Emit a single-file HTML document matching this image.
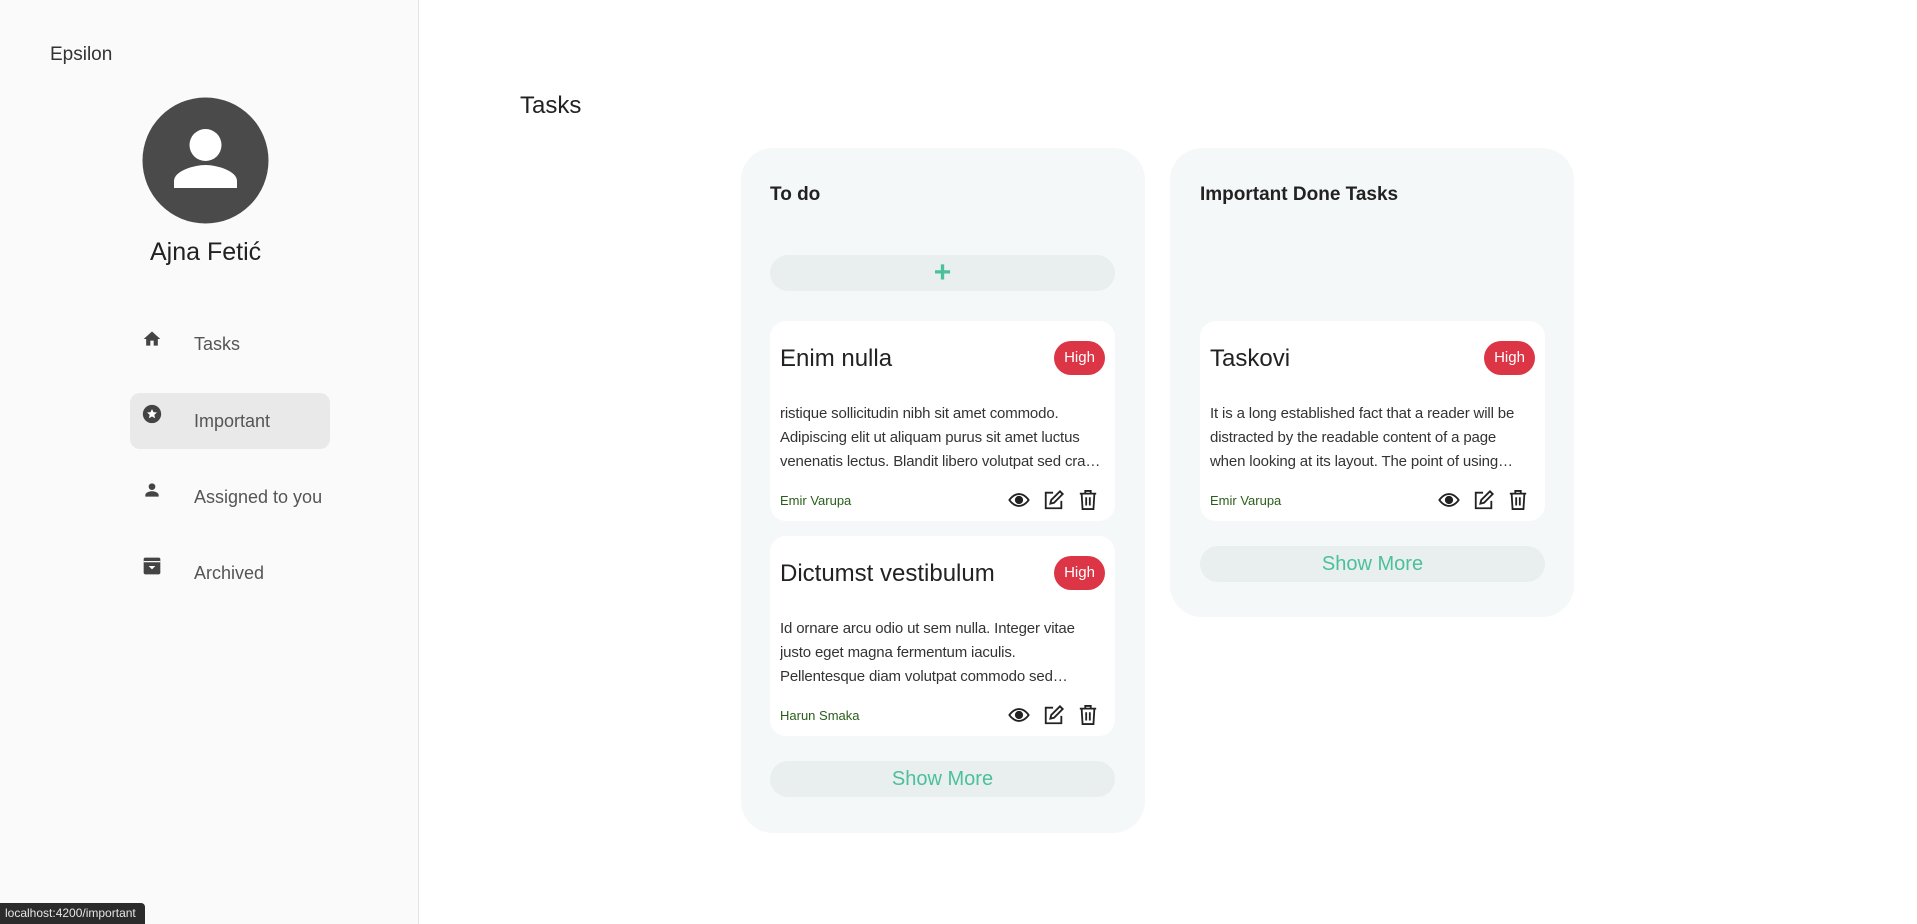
<!DOCTYPE html>
<html><head><meta charset="utf-8"><style>
*{margin:0;padding:0;box-sizing:border-box}
body{width:1917px;height:924px;background:#fff;font-family:"Liberation Sans",sans-serif;position:relative;overflow:hidden;color:#222}
.a{position:absolute}
.side{left:0;top:0;width:419px;height:924px;background:#fafafa;border-right:1px solid #e4e4e4}
.nav{font-size:18px;color:#555}
.col{background:#f5f8f8;border-radius:32px}
.card{background:#fff;border-radius:16px;width:345px;height:200px}
.card .t{position:absolute;left:10px;top:24px;font-size:24px;color:#222}
.card .b{position:absolute;right:10px;top:20px;width:51px;height:34px;border-radius:17px;background:#dc3545;color:#fff;font-size:15px;line-height:34px;text-align:center}
.card .d{position:absolute;left:10px;top:81px;width:325px;font-size:15px;line-height:24px;color:#333;letter-spacing:-0.15px;display:-webkit-box;-webkit-line-clamp:3;-webkit-box-orient:vertical;overflow:hidden}
.card .au{position:absolute;left:10px;top:172px;font-size:13px;color:#2a5d1a}
.card .ic{position:absolute;right:17px;top:168px;display:flex;gap:13px;align-items:center}
.sm{height:36px;border-radius:18px;background:#e8efee;color:#4cbf9e;font-size:20px;text-align:center;line-height:36px}
</style></head><body>
<div class="a side"></div>
<div class="a" style="left:50px;top:44px;font-size:19px;color:#333">Epsilon</div>
<svg class="a" style="left:142px;top:97px" width="127" height="127" viewBox="0 0 127 127"><circle cx="63.5" cy="63.5" r="63" fill="#4a4a4a"/><circle cx="63.5" cy="48" r="16" fill="#fff"/><path d="M32 91v-7c0-10 20-16 31.5-16S95 74 95 84v7z" fill="#fff"/></svg>
<div class="a" style="left:150px;top:238px;font-size:25px;color:#222">Ajna Fetić</div>
<div class="a" style="left:130px;top:393px;width:200px;height:56px;border-radius:10px;background:#e9e9e9"></div>
<svg class="a" style="left:142px;top:329px" width="20" height="20" viewBox="0 0 24 24"><path d="M10 20v-6h4v6h5v-8h3L12 3 2 12h3v8z" fill="#444"/></svg>
<svg class="a" style="left:141px;top:403px" width="22" height="22" viewBox="0 0 24 24"><circle cx="12" cy="12" r="10" fill="#444"/><path d="M12 6.5l1.6 3.5 3.8.4-2.9 2.5.9 3.7L12 14.7l-3.4 1.9.9-3.7-2.9-2.5 3.8-.4z" fill="#fff"/></svg>
<svg class="a" style="left:142px;top:480px" width="20" height="20" viewBox="0 0 24 24"><circle cx="12" cy="8" r="4" fill="#444"/><path d="M4 20v-2c0-3 5-4.5 8-4.5s8 1.5 8 4.5v2z" fill="#444"/></svg>
<svg class="a" style="left:142px;top:556px" width="20" height="20" viewBox="0 0 24 24"><rect x="2" y="2" width="20" height="20" rx="2" fill="#444"/><rect x="2" y="6" width="20" height="1.5" fill="#fafafa"/><path d="M8 12h8l-4 4z" fill="#fff"/></svg>
<div class="a nav" style="left:194px;top:334px">Tasks</div>
<div class="a nav" style="left:194px;top:411px">Important</div>
<div class="a nav" style="left:194px;top:487px">Assigned to you</div>
<div class="a nav" style="left:194px;top:563px">Archived</div>

<div class="a" style="left:520px;top:92px;font-size:24px;color:#222">Tasks</div>

<div class="a col" style="left:741px;top:148px;width:404px;height:685px"></div>
<div class="a" style="left:770px;top:184px;font-size:19px;font-weight:bold;color:#222">To do</div>
<div class="a sm" style="left:770px;top:255px;width:345px;font-size:30px;line-height:36px;font-weight:bold">+</div>

<div class="a col" style="left:1170px;top:148px;width:404px;height:469px"></div>
<div class="a" style="left:1200px;top:184px;font-size:19px;font-weight:bold;color:#222">Important Done Tasks</div>

<div class="a card" style="left:770px;top:321px">
<div class="t">Enim nulla</div><div class="b">High</div>
<div class="d">ristique sollicitudin nibh sit amet commodo. Adipiscing elit ut aliquam purus sit amet luctus venenatis lectus. Blandit libero volutpat sed cras ornare arcu dui vivamus arcu felis.</div>
<div class="au">Emir Varupa</div>
<div class="ic">ICONS</div>
</div>
<div class="a card" style="left:770px;top:536px">
<div class="t">Dictumst vestibulum</div><div class="b">High</div>
<div class="d">Id ornare arcu odio ut sem nulla. Integer vitae justo eget magna fermentum iaculis.<br>Pellentesque diam volutpat commodo sed egestas egestas quis varius quam.</div>
<div class="au">Harun Smaka</div>
<div class="ic">ICONS</div>
</div>
<div class="a sm" style="left:770px;top:761px;width:345px">Show More</div>

<div class="a card" style="left:1200px;top:321px">
<div class="t">Taskovi</div><div class="b">High</div>
<div class="d">It is a long established fact that a reader will be distracted by the readable content of a page when looking at its layout. The point of using Lorem Ipsum is that it has.</div>
<div class="au">Emir Varupa</div>
<div class="ic">ICONS</div>
</div>
<div class="a sm" style="left:1200px;top:546px;width:345px">Show More</div>

<div class="a" style="left:0;top:903px;width:145px;height:21px;background:#2b2b2b;border-top-right-radius:4px;color:#e6e6e6;font-size:12px;line-height:21px;padding-left:5px">localhost:4200/important</div>
<script>
var ic='<svg width="22" height="22" viewBox="0 0 24 24" fill="none" stroke="#222" stroke-width="2"><path d="M1.5 12S5.5 5.5 12 5.5 22.5 12 22.5 12 18.5 18.5 12 18.5 1.5 12 1.5 12z"/><circle cx="12" cy="12" r="3.5" fill="#222"/></svg>'+
'<svg width="22" height="22" viewBox="0 0 24 24" fill="none" stroke="#222" stroke-width="2"><path d="M11 4H3v17h17v-8"/><path d="M18.5 2.5l3 3L12 15l-4 1 1-4z"/></svg>'+
'<svg width="20" height="22" viewBox="0 0 22 24" fill="none" stroke="#222" stroke-width="2"><path d="M2 5h18M8 5V2h6v3M4 5l1 17h12l1-17M9 9v9M13 9v9"/></svg>';
document.querySelectorAll('.ic').forEach(function(e){e.innerHTML=ic});
</script>
</body></html>
